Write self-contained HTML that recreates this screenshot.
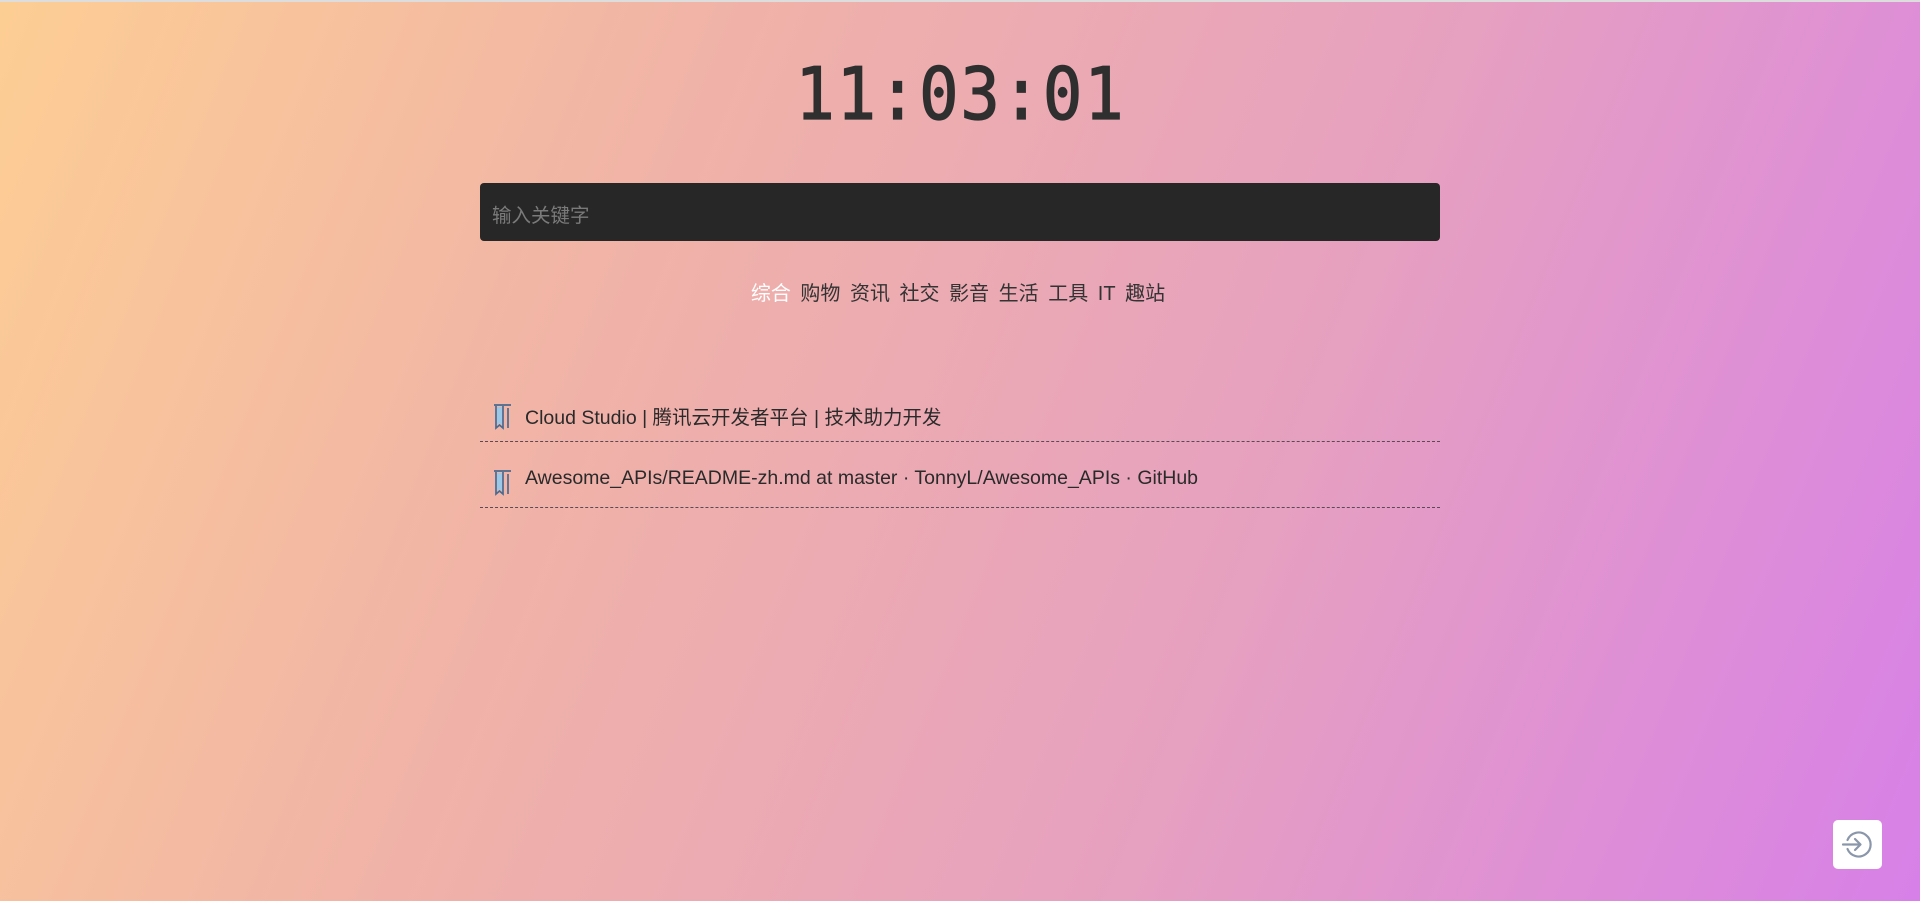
<!DOCTYPE html>
<html><head><meta charset="utf-8"><style>
html,body{margin:0;padding:0;width:1920px;height:901px;overflow:hidden}
body{background:linear-gradient(112deg,#fdce94 0%,#f0b2a8 33%,#e6a0c0 65%,#d780e8 100%);font-family:"Liberation Sans","Noto Sans CJK SC",sans-serif;position:relative;border-top:2px solid #ddd;box-sizing:border-box}
.clock{position:absolute;left:0;width:1920px;top:52px;text-align:center;font-family:"DejaVu Sans Mono","Liberation Mono",monospace;font-size:72px;line-height:80px;font-weight:normal;color:#2f2f2f;letter-spacing:2px;-webkit-text-stroke:1.3px #2f2f2f}
.clock span{display:inline-block;transform:scaleX(0.91)}
.search{position:absolute;left:480px;top:181px;width:960px;height:58px;background:#272727;border-radius:4px}
.search span{position:absolute;left:12px;top:16px;font-size:19.5px;color:#7a7a7a}
.tabs{position:absolute;left:0;width:1920px;top:275px;text-align:center;font-size:20px;color:#333;padding-right:4px;box-sizing:border-box}
.tabs span{margin:0 2px}
.tabs .on{color:#fff}
.item{position:absolute;left:480px;width:960px;height:40px;border-bottom:1px dashed #5a4a55;font-size:19.5px;color:#2a2a2a}
.item svg{position:absolute;left:12px;top:2px}
.item span{position:absolute;left:45px;top:0px}
.btn{position:absolute;left:1833px;top:818px;width:49px;height:49px;background:#fff;border-radius:5px}
</style></head><body>
<div class="clock"><span>11:03:01</span></div>
<div class="search"><span>输入关键字</span></div>
<div class="tabs"><span class="on">综合</span> <span>购物</span> <span>资讯</span> <span>社交</span> <span>影音</span> <span>生活</span> <span>工具</span> <span>IT</span> <span>趣站</span></div>
<div class="item" style="top:399px">
<svg width="22" height="27" viewBox="0 0 22 27"><path d="M2 2h17M4 3v22l3.5-3 3.5 3V3M16 5v20" fill="none" stroke="#4a6a90" stroke-width="1.7"/><path d="M5 4h5v18l-2.5-2-2.5 2z" fill="#9cc8e8"/></svg>
<span>Cloud Studio | 腾讯云开发者平台 | 技术助力开发</span></div>
<div class="item" style="top:465px">
<svg width="22" height="27" viewBox="0 0 22 27"><path d="M2 2h17M4 3v22l3.5-3 3.5 3V3M16 5v20" fill="none" stroke="#4a6a90" stroke-width="1.7"/><path d="M5 4h5v18l-2.5-2-2.5 2z" fill="#9cc8e8"/></svg>
<span>Awesome_APIs/README-zh.md at master · TonnyL/Awesome_APIs · GitHub</span></div>
<div class="btn"><svg width="49" height="49" viewBox="0 0 49 49"><path d="M14.5 20a12 12 0 1 1 0 9" fill="none" stroke="#8a96aa" stroke-width="2.2" stroke-linecap="round"/><path d="M10 24.5h17M22 19l5.5 5.5L22 30" fill="none" stroke="#8a96aa" stroke-width="2.2" stroke-linecap="round" stroke-linejoin="round"/></svg></div>
</body></html>
